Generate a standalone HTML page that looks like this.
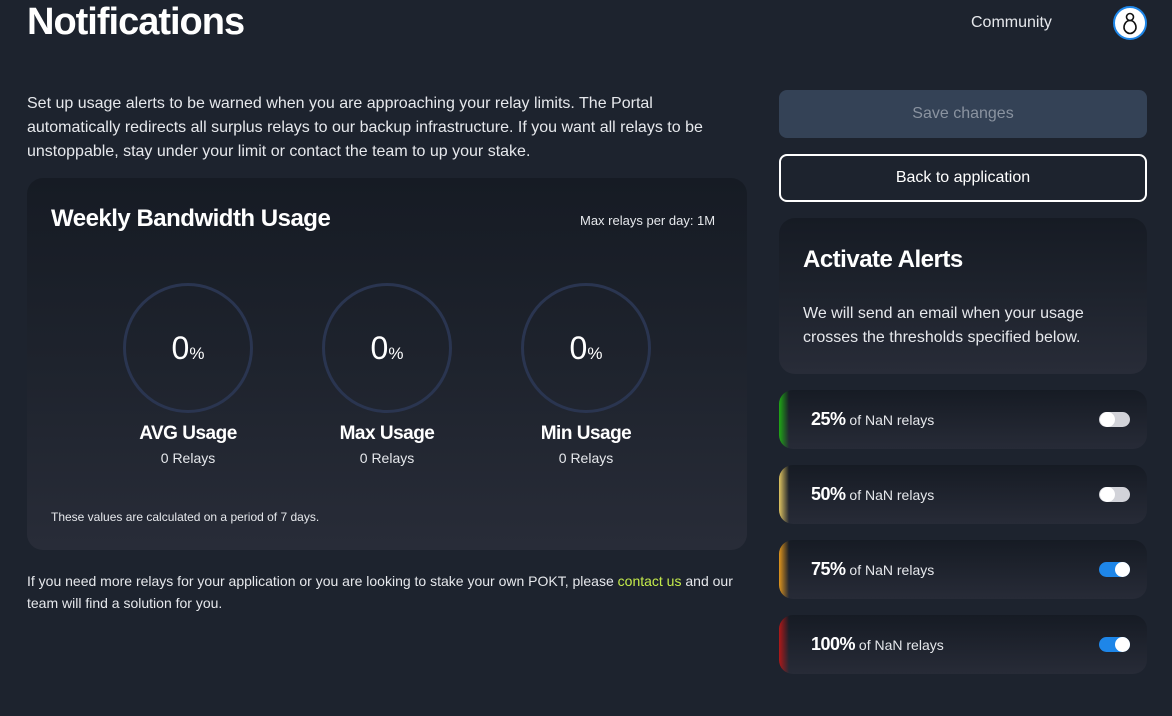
<!DOCTYPE html>
<html><head><meta charset="utf-8"><style>
*{margin:0;padding:0;box-sizing:border-box}
body{width:1172px;height:716px;background:#1d232e;color:#fff;font-family:"Liberation Sans",sans-serif;position:relative;overflow:hidden}
.abs{position:absolute}
.card{background:linear-gradient(180deg,#161b24 0%,#1e232d 50%,#282c38 100%);border-radius:16px}
.circ{position:absolute;width:130px;height:130px;border:3px solid #2a3550;border-radius:50%;top:283px}
.circ span{position:absolute;width:100%;text-align:center;top:44px;font-size:32px;color:#fff}
.circ small{font-size:17px}
.lbl{position:absolute;width:200px;text-align:center;top:423px;font-size:19px;font-weight:bold;letter-spacing:-0.5px}
.sub{position:absolute;width:200px;text-align:center;top:450px;font-size:14px;color:#e6e8ec}
.al{position:absolute;left:779px;width:368px;height:59px;border-radius:14px;overflow:hidden;background:linear-gradient(180deg,#161b24,#272b37)}
.al .bar{position:absolute;left:0;top:0;width:10px;height:100%}
.al .t{position:absolute;left:32px;top:19px;font-size:14px;color:#e6e8ec}
.al .t b{font-size:18px;color:#fff;letter-spacing:-0.5px}
.tg{position:absolute;left:320px;top:22px;width:31px;height:15px;border-radius:8px;background:#d2d3d9}
.tg i{position:absolute;left:1px;top:0px;width:15px;height:15px;border-radius:50%;background:#fff}
.tg.on{background:#1e86e8}.tg.on i{left:16px}
</style></head><body>
<div class="abs" style="left:27px;top:1px;font-size:38px;font-weight:bold;letter-spacing:-1px">Notifications</div>
<div class="abs" style="left:971px;top:14px;font-size:16px;color:#e6e8ec">Community</div>
<div class="abs" style="left:1113px;top:6px;width:34px;height:34px;border-radius:50%;background:#fff;border:2px solid #1e86e8">
<svg width="30" height="30" viewBox="0 0 30 30"><circle cx="15" cy="9" r="3.5" fill="none" stroke="#111" stroke-width="1.6"/><path d="M15 12.5c-4 0-6 4-6 7s3 6 6 6 6-3 6-6-2-7-6-7z" fill="none" stroke="#111" stroke-width="1.6"/></svg></div>
<div class="abs" style="left:27px;top:92px;width:720px;font-size:16px;line-height:24px;color:#e6e8ec">Set up usage alerts to be warned when you are approaching your relay limits. The Portal automatically redirects all surplus relays to our backup infrastructure. If you want all relays to be unstoppable, stay under your limit or contact the team to up your stake.</div>
<div class="abs card" style="left:27px;top:178px;width:720px;height:372px"></div>
<div class="abs" style="left:51px;top:205px;font-size:24px;font-weight:bold;letter-spacing:-0.5px">Weekly Bandwidth Usage</div>
<div class="abs" style="left:580px;top:213px;font-size:13px;color:#e6e8ec">Max relays per day: 1M</div>
<div class="circ" style="left:123px"><span>0<small>%</small></span></div>
<div class="circ" style="left:322px"><span>0<small>%</small></span></div>
<div class="circ" style="left:521px"><span>0<small>%</small></span></div>
<div class="lbl" style="left:88px">AVG Usage</div><div class="sub" style="left:88px">0 Relays</div>
<div class="lbl" style="left:287px">Max Usage</div><div class="sub" style="left:287px">0 Relays</div>
<div class="lbl" style="left:486px">Min Usage</div><div class="sub" style="left:486px">0 Relays</div>
<div class="abs" style="left:51px;top:510px;font-size:12px;color:#e6e8ec">These values are calculated on a period of 7 days.</div>
<div class="abs" style="left:27px;top:570px;width:730px;font-size:14px;line-height:22px;color:#e6e8ec">If you need more relays for your application or you are looking to stake your own POKT, please <span style="color:#c5ec4b">contact us</span> and our team will find a solution for you.</div>
<div class="abs" style="left:779px;top:90px;width:368px;height:48px;border-radius:8px;background:#344256;color:#8a93a0;font-size:16px;text-align:center;line-height:48px">Save changes</div>
<div class="abs" style="left:779px;top:154px;width:368px;height:48px;border-radius:8px;border:2px solid #fff;font-size:16px;text-align:center;line-height:44px">Back to application</div>
<div class="abs card" style="left:779px;top:218px;width:368px;height:156px"></div>
<div class="abs" style="left:803px;top:246px;font-size:24px;font-weight:bold;letter-spacing:-0.5px">Activate Alerts</div>
<div class="abs" style="left:803px;top:302px;width:320px;font-size:16px;line-height:24px;color:#e6e8ec">We will send an email when your usage crosses the thresholds specified below.</div>
<div class="al" style="top:390px"><div class="bar" style="background:linear-gradient(90deg,#1fa815,transparent)"></div><div class="t"><b>25%</b> of NaN relays</div><div class="tg"><i></i></div></div>
<div class="al" style="top:465px"><div class="bar" style="background:linear-gradient(90deg,#e0c460,transparent)"></div><div class="t"><b>50%</b> of NaN relays</div><div class="tg"><i></i></div></div>
<div class="al" style="top:540px"><div class="bar" style="background:linear-gradient(90deg,#e0951c,transparent)"></div><div class="t"><b>75%</b> of NaN relays</div><div class="tg on"><i></i></div></div>
<div class="al" style="top:615px"><div class="bar" style="background:linear-gradient(90deg,#b01818,transparent)"></div><div class="t"><b>100%</b> of NaN relays</div><div class="tg on"><i></i></div></div>
</body></html>
